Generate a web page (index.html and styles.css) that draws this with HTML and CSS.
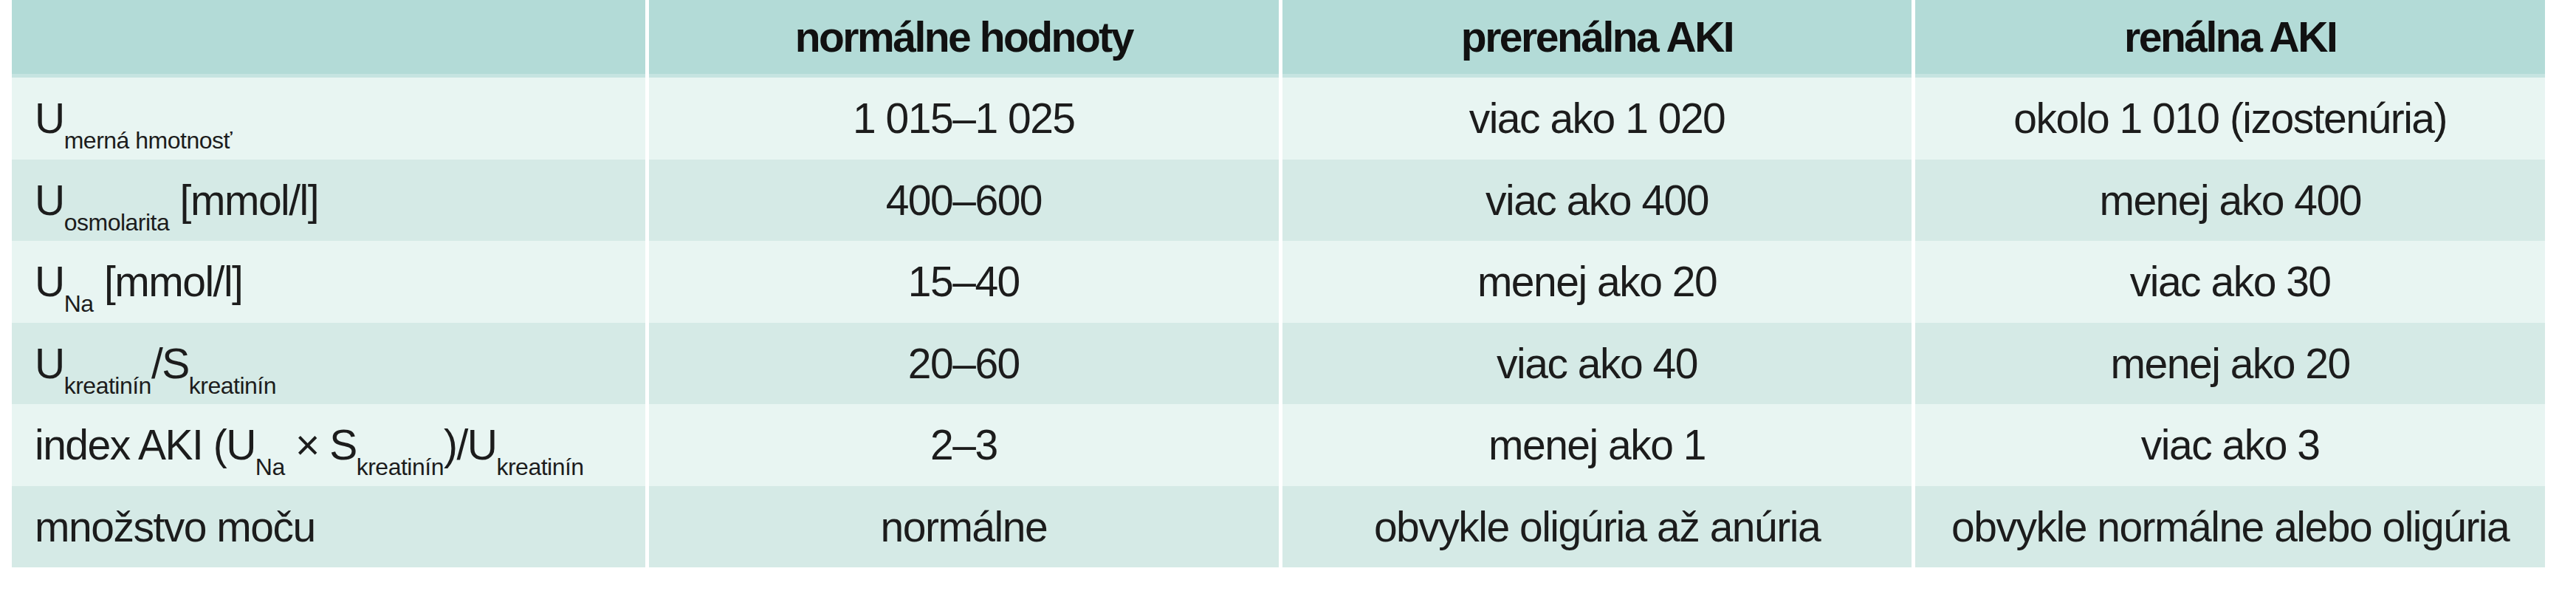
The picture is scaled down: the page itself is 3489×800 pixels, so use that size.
FILE: index.html
```html
<!DOCTYPE html>
<html lang="sk">
<head>
<meta charset="utf-8">
<title>AKI</title>
<link rel="stylesheet" href="styles.css">
</head>
<body>
<div class="table">
  <div class="row head">
    <div class="cell first"><span class="t"></span></div>
    <div class="cell"><span class="t">normálne hodnoty</span></div>
    <div class="cell"><span class="t">prerenálna AKI</span></div>
    <div class="cell"><span class="t">renálna AKI</span></div>
  </div>
  <div class="row light">
    <div class="cell first"><span class="t">U<sub>merná hmotnosť</sub></span></div>
    <div class="cell"><span class="t">1 015–1 025</span></div>
    <div class="cell"><span class="t">viac ako 1 020</span></div>
    <div class="cell"><span class="t">okolo 1 010 (izostenúria)</span></div>
  </div>
  <div class="row dark">
    <div class="cell first"><span class="t">U<sub>osmolarita</sub> [mmol/l]</span></div>
    <div class="cell"><span class="t">400–600</span></div>
    <div class="cell"><span class="t">viac ako 400</span></div>
    <div class="cell"><span class="t">menej ako 400</span></div>
  </div>
  <div class="row light">
    <div class="cell first"><span class="t">U<sub>Na</sub> [mmol/l]</span></div>
    <div class="cell"><span class="t">15–40</span></div>
    <div class="cell"><span class="t">menej ako 20</span></div>
    <div class="cell"><span class="t">viac ako 30</span></div>
  </div>
  <div class="row dark">
    <div class="cell first"><span class="t">U<sub>kreatinín</sub>/S<sub>kreatinín</sub></span></div>
    <div class="cell"><span class="t">20–60</span></div>
    <div class="cell"><span class="t">viac ako 40</span></div>
    <div class="cell"><span class="t">menej ako 20</span></div>
  </div>
  <div class="row light">
    <div class="cell first"><span class="t">index AKI (U<sub>Na</sub> × S<sub>kreatinín</sub>)/U<sub>kreatinín</sub></span></div>
    <div class="cell"><span class="t">2–3</span></div>
    <div class="cell"><span class="t">menej ako 1</span></div>
    <div class="cell"><span class="t">viac ako 3</span></div>
  </div>
  <div class="row dark">
    <div class="cell first"><span class="t">množstvo moču</span></div>
    <div class="cell"><span class="t">normálne</span></div>
    <div class="cell"><span class="t">obvykle oligúria až anúria</span></div>
    <div class="cell"><span class="t">obvykle normálne alebo oligúria</span></div>
  </div>
</div>
</body>
</html>
```

FILE: styles.css
```css
html, body {
  margin: 0;
  padding: 0;
  background: #ffffff;
}

body {
  font-family: "Liberation Sans", Arial, sans-serif;
  color: #1c1c1c;
}

.table {
  margin-left: 16px;
  width: 3431px;
  display: flex;
  flex-direction: column;
}

.row {
  display: grid;
  grid-template-columns: 858px repeat(3, 1fr);
  column-gap: 5px;
  height: 110.5px;
}

.cell {
  display: flex;
  align-items: center;
  justify-content: center;
  font-size: 57px;
  letter-spacing: -1.5px;
  white-space: nowrap;
}

.cell.first {
  justify-content: flex-start;
  padding-left: 31px;
}

.head {
  height: 105px;
}

.head .cell {
  background: #b3dbd7;
  border-bottom: 5px solid #c6e4e1;
  font-weight: bold;
  letter-spacing: -2.5px;
  color: #111111;
}

.light .cell {
  background: #e8f5f2;
}

.dark .cell {
  background: #d5eae6;
}

sub {
  font-size: 32px;
  letter-spacing: -0.5px;
  line-height: 0;
  vertical-align: -21px;
}
```
